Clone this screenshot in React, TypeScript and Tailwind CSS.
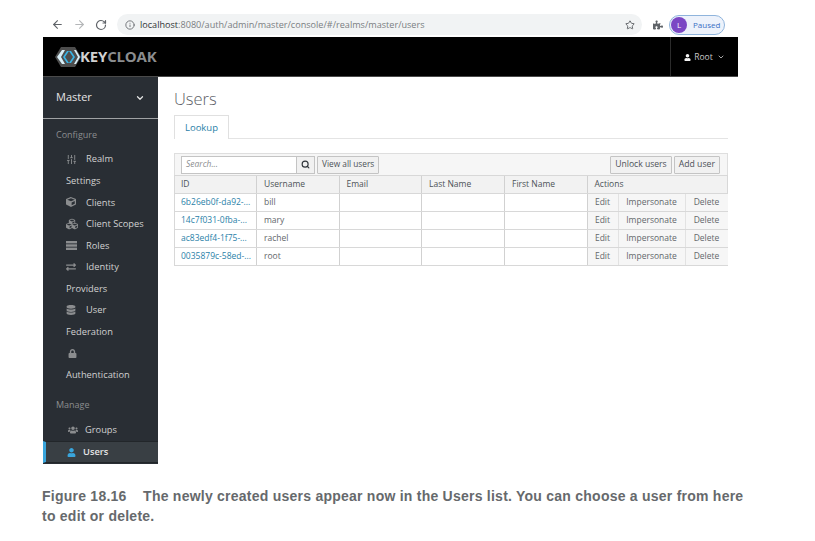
import { ArrowLeft, ArrowRight, RotateCw, Info, Star, ChevronDown, Search, SlidersVertical } from "lucide-react";
import { FaCube, FaCubes, FaDatabase, FaExchangeAlt, FaLock, FaPuzzlePiece, FaUser, FaUsers } from "react-icons/fa";
import type { ReactNode } from "react";

const rows = [
  ["6b26eb0f-da92-...", "bill"],
  ["14c7f031-0fba-...", "mary"],
  ["ac83edf4-1f75-...", "rachel"],
  ["0035879c-58ed-...", "root"],
];

function Logo() {
  return (
    <div className="flex items-center">
      <svg width="26" height="22" viewBox="0 0 26 22" className="shrink-0">
        <polygon points="6,1 20,1 26,11 20,21 6,21 0,11" fill="#4d4d4d" />
        <polygon points="7,4 10,4 6,11 10,18 7,18 2,11" fill="#d7eef7" />
        <polygon points="12,5 14,5 10,11 14,17 12,17 8,11" fill="#39b4e6" />
        <polygon points="14,5 16,5 20,11 16,17 14,17 18,11" fill="#39b4e6" />
        <polygon points="19,4 21,4 25,11 21,18 19,18 23,11" fill="#d7eef7" />
      </svg>
      <span className="ml-[-1px] font-['Open_Sans',sans-serif] text-[15px] font-bold tracking-[-0.2px] leading-none">
        <span className="text-[#d1d1d1]">KEY</span>
        <span className="text-[#8b8d8f]">CLOAK</span>
      </span>
    </div>
  );
}

function RolesIcon() {
  return (
    <svg width="11" height="9" viewBox="0 0 11 9" fill="#8b8d8f">
      <rect x="0" y="0" width="11" height="2.4" />
      <rect x="0" y="3.3" width="11" height="2.4" />
      <rect x="0" y="6.6" width="11" height="2.4" />
    </svg>
  );
}

function NavIcon({ icon, label }: { icon: ReactNode; label: string }) {
  return (
    <div className="flex h-[21.6px] items-center pl-[23px] text-[#d1d1d1]">
      <span className="flex w-[20px] text-[#8b8d8f]">{icon}</span>
      <span>{label}</span>
    </div>
  );
}

function NavText({ label }: { label: string }) {
  return <div className="flex h-[21.6px] items-center pl-[23px] text-[#d1d1d1]">{label}</div>;
}

function Sidebar() {
  return (
    <aside className="flex h-[387px] w-[115px] shrink-0 flex-col bg-[#292e34] font-['Open_Sans',sans-serif] text-[9.3px]">
      <div className="flex h-[42px] shrink-0 items-center justify-between border-b border-[#a0a2a4] pl-[13px] pr-[13px] text-[11px] text-[#e4e4e4]">
        <span>Master</span>
        <ChevronDown size={10} strokeWidth={3} />
      </div>
      <div className="pl-[13px] pt-[9px] pb-[6.5px] text-[9px] leading-[14px] text-[#8b8d8f]">Configure</div>
      <NavIcon icon={<SlidersVertical size={11} />} label="Realm" />
      <NavText label="Settings" />
      <NavIcon icon={<FaCube size={10} />} label="Clients" />
      <NavIcon icon={<FaCubes size={12} />} label="Client Scopes" />
      <NavIcon icon={<RolesIcon />} label="Roles" />
      <NavIcon icon={<FaExchangeAlt size={10} />} label="Identity" />
      <NavText label="Providers" />
      <NavIcon icon={<FaDatabase size={10} />} label="User" />
      <NavText label="Federation" />
      <div className="flex h-[21.6px] items-center pl-[25px] text-[#8b8d8f]">
        <FaLock size={9} />
      </div>
      <NavText label="Authentication" />
      <div className="pl-[13px] pt-[12px] pb-[7.5px] text-[9px] leading-[14px] text-[#8b8d8f]">Manage</div>
      <div className="flex h-[21.6px] items-center pl-[25px] font-medium text-[#d1d1d1]">
        <span className="flex w-[17px] text-[#8b8d8f]">
          <FaUsers size={10} />
        </span>
        <span>Groups</span>
      </div>
      <div className="flex h-[22px] items-center border-y border-[#22262a] border-l-[3px] border-l-[#39a5dc] bg-[#393f44] pl-[21px] font-semibold text-[#e4e4e4]">
        <span className="flex w-[16px] text-[#39a5dc]">
          <FaUser size={9} />
        </span>
        <span>Users</span>
      </div>
    </aside>
  );
}

function Btn({ children, size }: { children: ReactNode; size: string }) {
  return (
    <button className={`flex h-[18px] items-center rounded-[1px] border border-[#c4c4c4] bg-[#f1f1f1] px-[4px] text-[#4d5258] ${size}`}>
      {children}
    </button>
  );
}

function Table() {
  const widths = "grid grid-cols-[82px_82.5px_82.5px_83px_82.5px_31px_67px_42px]";
  const cell = "flex items-center border-r border-[#d1d1d1] pl-[7px]";
  return (
    <div className="mt-[14px] w-[554px] border-t border-[#dedede] text-[8.5px]">
      <div className="flex h-[21px] items-center justify-between border-x border-[#dedede] bg-[#f6f6f6] pl-[6px] pr-[7px]">
        <div className="flex items-center gap-[2px]">
          <div className="flex h-[18px] w-[134px] items-center border border-[#c4c4c4] bg-white">
            <span className="flex-1 pl-[4px] text-[8.5px] italic text-[#8b8d8f]">Search...</span>
            <span className="flex h-full w-[18px] items-center justify-center border-l border-[#c4c4c4] bg-[#f1f1f1] text-[#30353a]">
              <Search size={9} strokeWidth={3} />
            </span>
          </div>
          <Btn size="text-[8.3px]">View all users</Btn>
        </div>
        <div className="flex items-center gap-[2px]">
          <Btn size="text-[8.6px]">Unlock users</Btn>
          <Btn size="text-[8.7px]">Add user</Btn>
        </div>
      </div>
      <div className={`${widths} h-[19px] border border-[#d8d8d8] bg-[#f2f2f2] font-medium text-[#4d5258]`}>
        <div className={`${cell} !pl-[6px]`}>ID</div>
        <div className={cell}>Username</div>
        <div className={cell}>Email</div>
        <div className={cell}>Last Name</div>
        <div className={cell}>First Name</div>
        <div className="col-span-3 flex items-center pl-[7px]">Actions</div>
      </div>
      {rows.map(([id, name]) => (
        <div key={id} className={`${widths} h-[18px] border-x border-b border-[#d8d8d8] text-[#63676b]`}>
          <div className={`${cell} !pl-[6px] text-[#2a7fa8]`}>{id}</div>
          <div className={cell}>{name}</div>
          <div className={cell} />
          <div className={cell} />
          <div className={cell} />
          <div className="flex items-center justify-center border-r border-[#e2e2e2] bg-[#f6f6f6]">Edit</div>
          <div className="flex items-center justify-center border-r border-[#e2e2e2] bg-[#f6f6f6]">Impersonate</div>
          <div className="flex items-center justify-center bg-[#f6f6f6]">Delete</div>
        </div>
      ))}
    </div>
  );
}

export default function App() {
  return (
    <div className="h-[541px] w-[815px] overflow-hidden bg-white pt-[13px]">
      <div className="ml-[43px] w-[695px]">
        <div className="flex h-[24px] items-center pb-[1px]">
          <ArrowLeft size={13} className="ml-[8px] text-[#5f6368]" strokeWidth={2} />
          <ArrowRight size={13} className="ml-[9px] text-[#b4b6b8]" strokeWidth={2} />
          <RotateCw size={12} className="ml-[9px] text-[#5f6368]" strokeWidth={2.4} />
          <div className="ml-[10px] flex h-[21px] w-[525px] items-center rounded-full bg-[#f1f3f4] pl-[8px] pr-[7px] font-['Open_Sans',sans-serif] text-[9.1px]">
            <Info size={10} className="text-[#5f6368]" />
            <span className="ml-[5px] flex-1 text-[#7a7e82]">
              <span className="font-medium text-[#303336]">localhost</span>:8080/auth/admin/master/console/#/realms/master/users
            </span>
            <Star size={10} className="text-[#4d5156]" strokeWidth={2} />
          </div>
          <FaPuzzlePiece size={10} className="ml-[11px] text-[#5f6368]" />
          <div className="ml-[6px] flex h-[20px] w-[56px] items-center rounded-full border border-[#8fb4dc] bg-[#edf2fb] pl-[1px] font-['Open_Sans',sans-serif] text-[8px] text-[#3a6fc4]">
            <span className="flex h-[16px] w-[16px] items-center justify-center rounded-full bg-[#7b47c4] text-[8px] text-white">L</span>
            <span className="ml-[6px]">Paused</span>
          </div>
        </div>
        <header className="flex h-[40px] items-center justify-between border-b border-[#4a4a4a] bg-black">
          <div className="pl-[12px]">
            <Logo />
          </div>
          <div className="flex h-full w-[68px] items-center justify-center gap-[3px] border-l border-[#2b2b2b] pt-[1px] font-['Open_Sans',sans-serif] text-[8.5px] text-[#c8c8c8]">
            <FaUser size={7} className="text-[#f4f4f4]" />
            <span>Root</span>
            <ChevronDown size={8} strokeWidth={2.5} className="ml-[1px]" />
          </div>
        </header>
        <div className="flex">
          <Sidebar />
          <main className="flex-1 pl-[16px] font-['Open_Sans',sans-serif]">
            <h1 className="mt-[10px] text-[16.5px] leading-[24px] font-light text-[#5c6066]">Users</h1>
            <div className="mt-[4px] h-[24px] w-[554px] border-b border-[#e4e4e4]">
              <div className="flex h-[24px] w-[55px] items-center justify-center border-x border-t border-[#e0e0e0] bg-white pt-[2px] text-[9.5px] text-[#2a7fa8]">Lookup</div>
            </div>
            <Table />
          </main>
        </div>
      </div>
      <p className="ml-[42px] mt-[22px] w-[720px] font-['Liberation_Sans',sans-serif] text-[14px] leading-[20px] font-bold tracking-[0.24px] text-[#66696c]">
        Figure 18.16&nbsp;&nbsp;&nbsp; The newly created users appear now in the Users list. You can choose a user from here
        <br />
        to edit or delete.
      </p>
    </div>
  );
}
